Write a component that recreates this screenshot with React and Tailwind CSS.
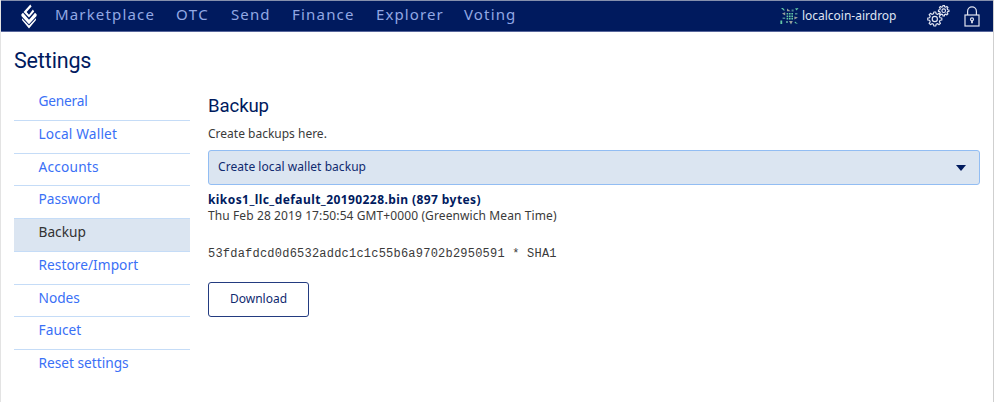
const navItems = [
  ["Marketplace", "w-[121px] tracking-[1.16px]"],
  ["OTC", "w-[55px] tracking-[1.5px]"],
  ["Send", "w-[61px] tracking-[1.1px]"],
  ["Finance", "w-[84px] tracking-[1.2px]"],
  ["Explorer", "w-[88px] tracking-[1.1px]"],
  ["Voting", "w-[60px] tracking-[1.15px]"],
];

const menuItems = [
  ["General", "tracking-[-0.2px]"],
  ["Local Wallet", "tracking-[0.16px]"],
  ["Accounts", "tracking-[0.2px]"],
  ["Password", "tracking-[0px]"],
  ["Backup", "tracking-[0px]"],
  ["Restore/Import", "tracking-[0.05px]"],
  ["Nodes", "tracking-[0px]"],
  ["Faucet", "tracking-[0.05px]"],
  ["Reset settings", "tracking-[0px]"],
];

function Logo() {
  return (
    <svg className="ml-[20px] mr-[18px] h-[25px] w-[16px]" viewBox="0 0 16 25" fill="#fff">
      <path d="M9.3.6 10.6 2.4 5.6 8 8 10.7 11.9 5.6 13.2 7.4 8 13.6 2.6 8z" />
      <path d="M.4 10.2 2 8.8 8 15.8 14 8.8 15.6 10.2V12L8 20.2.4 12z" />
      <path d="M1 14.2 8 21.6 15 14.2V15.9L8 24.6 1 15.9z" />
    </svg>
  );
}

function Identicon() {
  return (
    <svg className="mr-[3px] h-[18px] w-[19px]" viewBox="0 0 19 18">
      <g fill="#63c7a6">
        <path d="M1 1h2l2 2.6H3.6zM15 1.6 18.6 1l-2 2.4zM.4 13.4h1.8V17H.4zM15 14.4l3 2.6-3.4-1z" />
        <path d="M6.6 6h1.6v1.6H6.6zM9 6h1.6v1.6H9zM11.4 6H13v1.6h-1.6zM6.6 8.4h1.6V10H6.6zM9 8.4h1.6V10H9zM11.4 8.4H13V10h-1.6zM6.6 10.8h1.6v1.6H6.6zM9 10.8h1.6v1.6H9zM11.4 10.8H13v1.6h-1.6z" />
      </g>
      <path fill="#9a9f9c" d="M7 1.6l3.6 2.6H7zM2 6.6 5.2 5.2v3.4zM14.4 9.4l3.6 1-3.6 2zM9 14h3.8L11 17.4z" />
      <path fill="#4d8793" d="M11.6 2.6h2v2h-2zM2.6 10.4h2.6V12H2.6zM15 6h2.4v1.6H15zM6 14h2v2H6z" />
    </svg>
  );
}

function gearPath(cx, cy, inner, outer, teeth) {
  const points = [];
  for (let i = 0; i < teeth; i++) {
    [[-0.3, inner], [-0.18, outer], [0.18, outer], [0.3, inner]].forEach(([offset, radius]) => {
      const angle = ((i + offset) / teeth) * Math.PI * 2;
      points.push(`${(cx + radius * Math.cos(angle)).toFixed(2)} ${(cy + radius * Math.sin(angle)).toFixed(2)}`);
    });
  }
  return `M${points.join("L")}Z`;
}

function Gears() {
  return (
    <svg className="h-[22px] w-[23px]" viewBox="0 0 23 22" fill="none" stroke="#e3e7f3" strokeWidth="1.15">
      <path d={gearPath(7.8, 14, 5.4, 7.1, 8)} strokeLinejoin="round" />
      <circle cx="7.8" cy="14" r="2.6" />
      <path d={gearPath(16.7, 5.7, 4, 5.3, 8)} strokeLinejoin="round" />
      <circle cx="16.7" cy="5.7" r="1.8" />
    </svg>
  );
}

function Lock() {
  return (
    <svg className="ml-[14px] mr-[13px] h-[21px] w-[16px]" viewBox="0 0 16 21" fill="none" stroke="#dfe3f0" strokeWidth="1.2">
      <path d="M3.6 9V5.2a4.4 4.4 0 0 1 8.8 0V9" />
      <rect x="1" y="9" width="14" height="11" />
      <circle cx="8" cy="13.3" r="1.5" />
      <path d="M8 14.8v2.4" strokeWidth="1.8" />
    </svg>
  );
}

export default function App() {
  return (
    <div className="h-[402px] overflow-hidden border-l border-r border-l-[#e3e3e3] border-r-[#cfcfcf] bg-white font-['Noto_Sans',sans-serif] text-[12px] text-[#3a3a3a]">
      <header className="flex h-[32px] items-center border-t border-b border-t-[#8590ad] border-b-[#57669b] bg-[#001a5e]">
        <Logo />
        <nav className="-mt-[4px] flex text-[15px] leading-[20px] text-[#92a8e4]">
          {navItems.map(([label, style]) => (
            <a key={label} className={style}>{label}</a>
          ))}
        </nav>
        <div className="ml-auto flex items-center">
          <Identicon />
          <span className="mr-[30.5px] text-[12px] leading-[16px] text-[#dfe4f3]">localcoin-airdrop</span>
          <Gears />
          <Lock />
        </div>
      </header>

      <h1 className="ml-[13px] mt-[15px] font-['Roboto',sans-serif] text-[21.5px] leading-[28px] tracking-[-0.15px] text-[#001a5e]">Settings</h1>

      <div className="flex pl-[13px] pr-[13px] pt-[13px]">
        <ul className="w-[176px] shrink-0">
          {menuItems.map(([label, tracking], i) => (
            <li
              key={label}
              className={`h-[32.75px] pl-[24.5px] pt-[3.2px] text-[13.7px] leading-[20px] ${i < 8 ? "border-b border-[#c5dcf7]" : ""} ${label === "Backup" ? "bg-[#dbe5f1] text-[#333]" : "text-[#3a70f6]"} ${tracking}`}
            >
              {label}
            </li>
          ))}
        </ul>

        <main className="ml-[18px] flex-1">
          <h2 className="mt-[6px] font-['Roboto',sans-serif] text-[18.6px] leading-[24px] tracking-[-0.1px] text-[#001a5e]">Backup</h2>
          <p className="mt-[8px] leading-[16px]">Create backups here.</p>
          <div className="mt-[8px] flex h-[35px] items-center justify-between rounded-[3px] border border-[#92bdf3] bg-[#dbe5f1] pl-[9px] pr-[13px] text-[#102a70]">
            <span className="-mt-[2px] tracking-[0.05px]">Create local wallet backup</span>
            <svg className="h-[6px] w-[10px]" viewBox="0 0 10 6"><path d="M0 0h10L5 6z" fill="#001a5e" /></svg>
          </div>
          <p className="mt-[6px] font-bold leading-[17px] tracking-[0.42px] text-[#001a5e]">kikos1_llc_default_20190228.bin (897 bytes)</p>
          <p className="leading-[16px] tracking-[0.1px]">Thu Feb 28 2019 17:50:54 GMT+0000 (Greenwich Mean Time)</p>
          <pre className="mt-[22px] font-['Liberation_Mono',monospace] text-[12px] leading-[17px] tracking-[0.22px]">53fdafdcd0d6532addc1c1c55b6a9702b2950591 * SHA1</pre>
          <button className="mt-[19px] h-[35px] w-[101px] rounded-[3px] border border-[#233b80] pb-[2px] text-[12px] text-[#102a70]">Download</button>
        </main>
      </div>
    </div>
  );
}
